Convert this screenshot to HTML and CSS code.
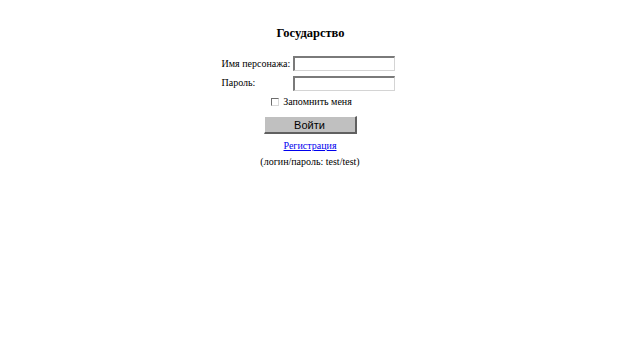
FILE: index.html
```html
<!DOCTYPE html>
<html lang="ru">
<head>
<meta charset="utf-8">
<title>Государство</title>
<link rel="stylesheet" href="styles.css">
</head>
<body>
<div class="page">
  <h1 class="title">Государство</h1>
  <form class="login">
    <div class="row">
      <label class="label" for="name">Имя персонажа:</label>
      <input class="field" id="name" type="text">
    </div>
    <div class="row">
      <label class="label" for="pass">Пароль:</label>
      <input class="field" id="pass" type="password">
    </div>
    <div class="remember">
      <span class="check"></span>
      <span>Запомнить меня</span>
    </div>
    <button class="submit" type="button">Войти</button>
    <a class="reg" href="#">Регистрация</a>
    <div class="hint">(логин/пароль: test/test)</div>
  </form>
</div>
</body>
</html>
```

FILE: styles.css
```css
html, body {
  margin: 0;
  padding: 0;
  background: #fff;
}
body {
  font-family: "Liberation Serif", "Times New Roman", serif;
  font-size: 10px;
  color: #000;
}
.page {
  display: flex;
  flex-direction: column;
  align-items: center;
  padding-top: 26px;
}
.title {
  margin: 0;
  font-size: 12.5px;
  font-weight: bold;
  line-height: 14px;
  margin-left: 1px;
}
.login {
  display: flex;
  flex-direction: column;
  align-items: center;
  margin-top: 14px;
}
.row {
  display: flex;
  align-items: center;
  height: 19.5px;
  margin-right: 4px;
}
.label {
  width: 71px;
  line-height: 12px;
}
.field {
  box-sizing: border-box;
  width: 102px;
  height: 15px;
  margin: 0;
  padding: 0;
  border: 1px solid #d4d4d4;
  border-top: 2px solid #7a7a7a;
  border-left: 2px solid #7a7a7a;
  background: #fff;
}
.remember {
  display: flex;
  align-items: center;
  gap: 4px;
  margin-top: 3px;
  margin-left: 3px;
  line-height: 12px;
}
.check {
  box-sizing: border-box;
  width: 8px;
  height: 8px;
  border: 1px solid #d8d8d8;
  border-top-color: #6e6e6e;
  border-left-color: #6e6e6e;
  background: #fff;
}
.submit {
  box-sizing: border-box;
  width: 93px;
  height: 18px;
  margin-top: 8px;
  padding: 0;
  font-family: "Liberation Sans", Arial, sans-serif;
  font-size: 11px;
  color: #000;
  background: #c0c0c0;
  border: 1px solid #fff;
  border-right: 2px solid #606060;
  border-bottom: 2px solid #606060;
}
.reg {
  margin-top: 6px;
  color: #0000ee;
  text-decoration: underline;
  line-height: 12px;
}
.hint {
  margin-top: 4px;
  line-height: 12px;
}
```
